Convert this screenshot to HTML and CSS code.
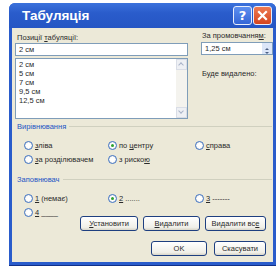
FILE: index.html
```html
<!DOCTYPE html>
<html lang="uk">
<head>
    <meta charset="UTF-8">
    <title>Табуляція</title>
    <link rel="stylesheet" href="styles.css">
</head>
<body>
    <div class="dialog">
        <div class="titlebar">
            <span class="title">Табуляція</span>
            <span class="tb-btn help">?</span>
            <span class="tb-btn close">
                <svg width="11" height="11" viewBox="0 0 11 11"><path d="M2 2 L9 9 M9 2 L2 9" stroke="#fff" stroke-width="2.2" stroke-linecap="square"/></svg>
            </span>
        </div>
        <div class="client">
            <div class="top">
                <div class="col-left">
                    <div class="label">Позиції <u>т</u>абуляції:</div>
                    <div class="edit">2 см</div>
                    <div class="list">
                        <div class="items">
                            <div>2 см</div>
                            <div>5 см</div>
                            <div>7 см</div>
                            <div>9,5 см</div>
                            <div>12,5 см</div>
                        </div>
                        <div class="scroll">
                            <span class="arrow up"></span>
                            <span class="arrow down"></span>
                        </div>
                    </div>
                </div>
                <div class="col-right">
                    <div class="label">За промовчання<u>м</u>:</div>
                    <div class="spin">
                        <span>1,25 см</span>
                        <span class="spin-btns">
                            <span class="tri up"></span>
                            <span class="tri down"></span>
                        </span>
                    </div>
                    <div class="label deleted">Буде видалено:</div>
                </div>
            </div>

            <div class="group-title">Вирівнювання</div>
            <div class="radios">
                <span class="radio"><i></i><span><u>з</u>ліва</span></span>
                <span class="radio"><i class="on"></i><span>по <u>ц</u>ентру</span></span>
                <span class="radio"><i></i><span><u>с</u>права</span></span>
                <span class="radio"><i></i><span><u>з</u>а розділювачем</span></span>
                <span class="radio"><i></i><span>з риско<u>ю</u></span></span>
            </div>

            <div class="group-title fill">Заповнювач</div>
            <div class="radios">
                <span class="radio"><i></i><span><u>1</u> (немає)</span></span>
                <span class="radio"><i class="on"></i><span><u>2</u> .......</span></span>
                <span class="radio"><i></i><span><u>3</u> -------</span></span>
                <span class="radio"><i></i><span><u>4</u> ____</span></span>
            </div>

            <div class="buttons">
                <span class="btn set"><span><u>У</u>становити</span></span>
                <span class="btn del"><span><u>В</u>идалити</span></span>
                <span class="btn del-all"><span>Видалити вс<u>е</u></span></span>
            </div>
            <div class="buttons main">
                <span class="btn ok">OK</span>
                <span class="btn cancel">Скасувати</span>
            </div>
        </div>
    </div>
</body>
</html>
```

FILE: styles.css
```css
body {
    margin: 0;
    background-color: #fff;
    font-family: "Liberation Sans", Arial, sans-serif;
    font-size: 7.5px;
    color: #2a2a2a;
}
.dialog {
    margin: 3px 0 0 9px;
    width: 267px;
    height: 263px;
    box-sizing: border-box;
    background-color: #2a5ccb;
    border-radius: 6px 6px 0 0;
    padding: 0 3px 3px 3px;
    display: flex;
    flex-direction: column;
    border-bottom: 1px solid #12318a;
}
.titlebar {
    height: 25px;
    display: flex;
    align-items: center;
    margin: 0 -3px;
    padding: 0 4px 0 13px;
    background: linear-gradient(#3b72dc, #2a5ccb 40%, #2556c4);
    border-radius: 6px 6px 0 0;
}
.title {
    flex: 1;
    color: #fff;
    font-family: "Liberation Sans", Arial, sans-serif;
    font-weight: bold;
    font-size: 13.5px;
}
.tb-btn {
    width: 19px;
    height: 19px;
    box-sizing: border-box;
    border: 1px solid #e8eefc;
    border-radius: 3px;
    margin-left: 1px;
    display: flex;
    align-items: center;
    justify-content: center;
    color: #fff;
    font-family: "DejaVu Sans", sans-serif;
    font-weight: bold;
    font-size: 13px;
}
.help {
    background: linear-gradient(#5d8ff0, #3466d6);
}
.close {
    background: linear-gradient(#ee7a52, #d4451f);
}
.client {
    flex: 1;
    background-color: #ece9d8;
    padding: 0 1px 0 3px;
}
.top {
    display: flex;
    padding-top: 5px;
}
.col-left {
    width: 173px;
    flex-shrink: 0;
}
.col-right {
    margin-left: 13px;
    width: 72px;
    flex-shrink: 0;
}
.label {
    height: 10px;
    padding-left: 2px;
    line-height: 10px;
}
.edit {
    height: 13px;
    box-sizing: border-box;
    border: 1px solid #7f9db9;
    background-color: #fff;
    padding-left: 3px;
    line-height: 11px;
}
.list {
    margin-top: 2px;
    height: 61px;
    box-sizing: border-box;
    border: 1px solid #7f9db9;
    background-color: #fff;
    display: flex;
}
.items {
    flex: 1;
    padding: 1px 0 0 3px;
    line-height: 9px;
}
.scroll {
    width: 11px;
    background-color: #f4f3ee;
    display: flex;
    flex-direction: column;
    justify-content: space-between;
}
.arrow {
    height: 11px;
    background-color: #eef0f4;
    border: 1px solid #d9dde6;
    box-sizing: border-box;
    position: relative;
}
.arrow::after {
    content: "";
    position: absolute;
    left: 2px;
    top: 3px;
    width: 3px;
    height: 3px;
    border-left: 1px solid #a9b3c8;
    border-top: 1px solid #a9b3c8;
    transform: rotate(45deg);
}
.arrow.down::after {
    top: 1px;
    transform: rotate(225deg);
}
.col-right .label {
    padding-left: 1px;
    margin-top: -2px;
    margin-bottom: 1px;
}
.col-right .deleted {
    margin-top: 14px;
}
.spin {
    height: 13px;
    box-sizing: border-box;
    border: 1px solid #7f9db9;
    background-color: #fff;
    display: flex;
    align-items: center;
    padding-left: 3px;
}
.spin span:first-child {
    flex: 1;
}
.spin-btns {
    width: 10px;
    height: 11px;
    background-color: #dce6f8;
    display: flex;
    flex-direction: column;
    align-items: center;
    justify-content: center;
    gap: 2px;
}
.tri {
    width: 0;
    height: 0;
    border-left: 2px solid transparent;
    border-right: 2px solid transparent;
}
.tri.up {
    border-bottom: 2px solid #4d6185;
}
.tri.down {
    border-top: 2px solid #4d6185;
}
.group-title {
    margin-top: 2px;
    padding-left: 2px;
    color: #2152c4;
    display: flex;
    align-items: center;
    gap: 3px;
    height: 10px;
}
.group-title::after {
    content: "";
    flex: 1;
    border-top: 1px solid #d0d0bf;
}
.group-title.fill {
    margin-top: 10px;
}
.radios {
    display: grid;
    grid-template-columns: 84px 87px 1fr;
    row-gap: 5px;
    padding: 10px 0 0 9px;
}
.radio {
    display: flex;
    align-items: center;
    gap: 2px;
    height: 9px;
}
.radio i {
    width: 9px;
    height: 9px;
    flex-shrink: 0;
    box-sizing: border-box;
    border: 1px solid #3e72c4;
    border-radius: 50%;
    background: radial-gradient(#ffffff 40%, #dcdcd4);
    display: flex;
    align-items: center;
    justify-content: center;
}
.radio i.on::after {
    content: "";
    width: 3px;
    height: 3px;
    border-radius: 50%;
    background-color: #2fa12f;
}
.buttons {
    display: flex;
    justify-content: flex-end;
    gap: 5px;
    margin-top: -1px;
    padding-right: 6px;
}
.btn {
    height: 15px;
    box-sizing: border-box;
    border: 1px solid #1e3f80;
    border-radius: 3px;
    background: linear-gradient(#ffffff, #f0efe8 80%, #d8d5c8);
    display: flex;
    align-items: center;
    justify-content: center;
}
.set {
    width: 58px;
}
.del {
    width: 57px;
}
.del-all {
    width: 61px;
}
.buttons.main {
    margin-top: 10px;
    gap: 7px;
}
.ok {
    width: 56px;
}
.cancel {
    width: 52px;
}
```
